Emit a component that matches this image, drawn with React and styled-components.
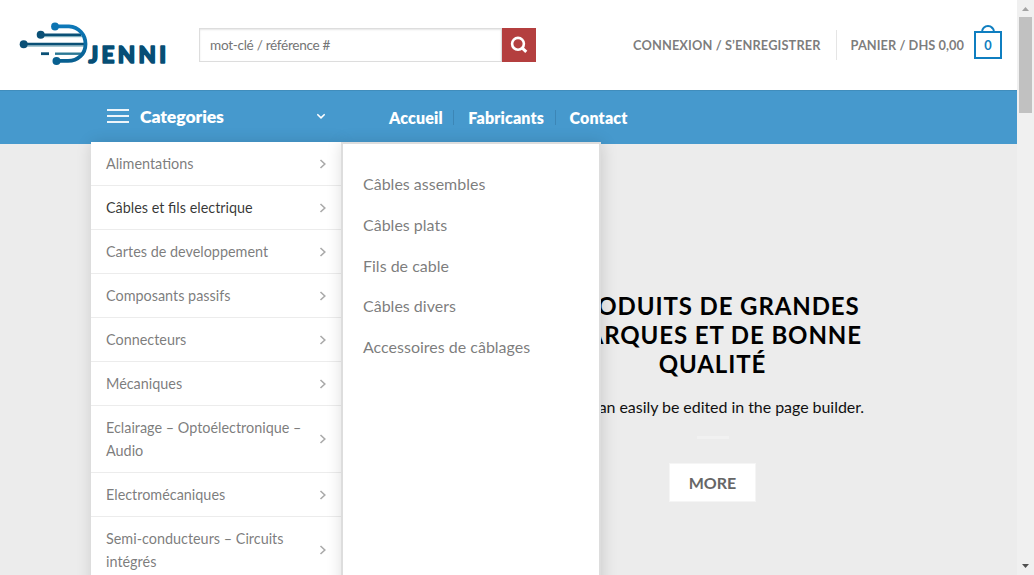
import React from 'react';
import styled, { createGlobalStyle } from 'styled-components';

const GlobalStyle = createGlobalStyle`
  *, *::before, *::after { box-sizing: border-box; }
  body { margin: 0; overflow: hidden; font-family: Lato, sans-serif; color: #777; background: #fff; }
  h2, p, ul { margin: 0; padding: 0; list-style: none; }
  a { color: inherit; text-decoration: none; }
  button, input { font-family: inherit; border-radius: 0; margin: 0; }
`;

const Viewport = styled.div`
  display: flex;
  width: 1034px;
  height: 575px;
  overflow: hidden;
`;

const Page = styled.div`
  flex: 1;
  display: flex;
  flex-direction: column;
  min-width: 0;
`;

const TopBar = styled.header`
  display: flex;
  align-items: center;
  height: 90px;
  padding: 0 15px 0 19px;
`;

const Logo = styled.svg`
  display: block;
  flex: none;
  width: 150px;
  height: 48px;
  margin-right: 30px;
`;

const SearchForm = styled.form`
  display: flex;
  width: 337px;
  height: 34px;
`;

const SearchInput = styled.input`
  flex: 1;
  min-width: 0;
  padding: 0 10px;
  border: 1px solid #ddd;
  box-shadow: inset 0 1px 2px rgba(0, 0, 0, 0.1);
  color: #333;
  font-size: 13.6px;
  letter-spacing: -0.3px;
  outline: none;
  &::placeholder { color: #757575; }
`;

const SearchButton = styled.button`
  display: flex;
  align-items: center;
  justify-content: center;
  width: 34px;
  padding: 0 0 1px;
  border: 0;
  background: #b43f3f;
  color: #fff;
`;

const Account = styled.nav`
  display: flex;
  align-items: center;
  margin-left: auto;
  font-size: 12.8px;
  font-weight: 700;
  letter-spacing: 0.12px;
  color: rgba(102, 102, 102, 0.85);
  white-space: nowrap;
`;

const AccountDivider = styled.span`
  width: 1px;
  height: 30px;
  margin: 0 14px 0 15px;
  background: rgba(0, 0, 0, 0.1);
`;

const CartLabel = styled.a`
  letter-spacing: 0.05px;
`;

const CartBag = styled.span`
  position: relative;
  display: flex;
  align-items: center;
  justify-content: center;
  width: 28px;
  height: 28px;
  margin-left: 10px;
  border: 2px solid #0f7ec0;
  color: #0f7ec0;
  letter-spacing: 0;
  &::after {
    content: '';
    position: absolute;
    left: 5px;
    bottom: 24px;
    width: 14px;
    height: 8px;
    border: 2px solid #0f7ec0;
    border-bottom: 0;
    border-radius: 99px 99px 0 0;
  }
`;

const NavBar = styled.div`
  position: relative;
  z-index: 2;
  display: flex;
  align-items: center;
  flex: none;
  height: 54px;
  padding-left: 91px;
  background: #4699cd;
  box-shadow: inset 0 1px 0 #408dbc;
  color: #fff;
`;

const CategoryToggle = styled.div`
  display: flex;
  align-items: center;
  width: 250px;
  padding: 0 16px 2px;
  font-size: 17.6px;
  font-weight: 800;
  letter-spacing: -0.1px;
  svg:last-child { margin-left: auto; }
`;

const ToggleLabel = styled.span`
  margin-left: 11px;
`;

const NavLinks = styled.ul`
  display: flex;
  align-items: center;
  margin-left: 48px;
  font-size: 16px;
  font-weight: 800;
  letter-spacing: 0.15px;
`;

const NavLink = styled.li`
  display: flex;
  align-items: center;
  &:not(:last-child)::after {
    content: '';
    width: 1px;
    height: 15px;
    margin: 0 14px 0 10.5px;
    background: #3c86b6;
  }
`;

const Dropdown = styled.div`
  position: absolute;
  top: 52px;
  left: 91px;
  display: flex;
  height: 520px;
`;

const CategoryList = styled.ul`
  width: 250px;
  background: #fff;
  box-shadow: 1px 1px 15px rgba(0, 0, 0, 0.15);
`;

const CategoryItem = styled.li`
  display: flex;
  align-items: center;
  justify-content: space-between;
  padding: 10px 14.500px 10px 15px;
  border-bottom: 1px solid #ececec;
  font-size: 14.4px;
  line-height: 23px;
  color: ${({ $active }) => ($active ? 'rgba(17, 17, 17, 0.85)' : 'rgba(102, 102, 102, 0.85)')};
  svg { flex: none; color: #aaa; }
`;

const CategoryLabel = styled.span`
  width: 204px;
`;

const SubMenu = styled.ul`
  width: 260px;
  padding: 20px;
  border: 2px solid #ddd;
  background: #fff;
  box-shadow: 1px 1px 15px rgba(0, 0, 0, 0.15);
  color: rgba(102, 102, 102, 0.85);
`;

const SubItem = styled.li`
  font-size: 16px;
  line-height: 20.8px;
  padding: 10px 0;
`;

const Hero = styled.main`
  flex: 1;
  display: flex;
  flex-direction: column;
  align-items: center;
  padding: 147px 0 0 408px;
  background: #ececec;
  text-align: center;
`;

const HeroTitle = styled.h2`
  width: 330px;
  color: #000;
  font-size: 24px;
  font-weight: 700;
  line-height: 29px;
  letter-spacing: 0.9px;
  text-transform: uppercase;
`;

const HeroText = styled.p`
  margin-top: 16px;
  color: #111;
  font-size: 16px;
  line-height: 26px;
  letter-spacing: -0.05px;
`;

const HeroRule = styled.span`
  width: 32px;
  height: 3px;
  margin-top: 16px;
  background: #f1f1f1;
`;

const HeroButton = styled.button`
  width: 87px;
  height: 39px;
  margin-top: 24px;
  padding: 0 0 1px;
  border: 1px solid #f5f5f5;
  background: #fff;
  color: #666;
  font-size: 16px;
  font-weight: 700;
`;

const ScrollTrack = styled.aside`
  display: flex;
  flex-direction: column;
  align-items: center;
  width: 17px;
  background: #f0f0f0;
  svg { display: block; flex: none; }
  svg:last-child { margin-top: auto; }
`;

const ScrollThumb = styled.span`
  width: 13px;
  height: 96px;
  background: #c1c1c1;
`;

const CATEGORIES = [
  'Alimentations',
  'Câbles et fils electrique',
  'Cartes de developpement',
  'Composants passifs',
  'Connecteurs',
  'Mécaniques',
  'Eclairage – Optoélectronique – Audio',
  'Electromécaniques',
  'Semi-conducteurs – Circuits intégrés',
];

const CABLES = [
  'Câbles assembles',
  'Câbles plats',
  'Fils de cable',
  'Câbles divers',
  'Accessoires de câblages',
];

const LINKS = ['Accueil', 'Fabricants', 'Contact'];

function BrandLogo() {
  return (
    <Logo viewBox="0 0 150 48" role="img" aria-label="Djenni">
      <defs>
        <linearGradient id="arc" x1="0" y1="0" x2="0" y2="1">
          <stop offset="0" stopColor="#0d78b8" />
          <stop offset="1" stopColor="#085f90" />
        </linearGradient>
      </defs>
      <g transform="translate(0 0.9)">
        <g fill="none">
          <path d="M22 12.900H62" stroke="#0a5076" strokeWidth="2.800" />
          <path d="M22 14.800H63" stroke="#6fa5b5" strokeWidth="1" />
          <path d="M5 22.300H66" stroke="#0a5076" strokeWidth="2.800" />
          <path d="M5 24.200H66" stroke="#6fa5b5" strokeWidth="1" />
          <path d="M22 31.8H30" stroke="#0a5076" strokeWidth="2.8" />
          <path d="M36 31.8H63" stroke="#2b7895" strokeWidth="2.4" />
          <path d="M36 4.5H50C60 5 66.500 13 66.500 22C66.500 32 59 39 49 39H37" stroke="url(#arc)" strokeWidth="3.800" />
        </g>
        <circle cx="36" cy="4.600" r="3.900" fill="#0d74b2" />
        <circle cx="21.700" cy="12.800" r="4" fill="#0a5076" />
        <circle cx="4.700" cy="22.300" r="4" fill="#0a5076" />
        <circle cx="37.500" cy="39" r="4" fill="#086090" />
      </g>
      <text
        x="69.500"
        y="41.700"
        textLength="77.500"
        lengthAdjust="spacing"
        fill="#064e75"
        stroke="#064e75"
        strokeWidth="1.600"
        strokeLinejoin="round"
        fontFamily="Lato, sans-serif"
        fontWeight="900"
        fontSize="22.500"
      >
        JENNI
      </text>
    </Logo>
  );
}

function Chevron({ down }) {
  return (
    <svg width="8" height="10" viewBox="0 0 8 10" fill="none" stroke="currentColor" strokeWidth="1.6">
      <path d={down ? 'M0.3 3.300L4 6.800L7.700 3.300' : 'M1.500 1L5.800 5L1.500 9'} />
    </svg>
  );
}

export default function App() {
  return (
    <Viewport>
      <GlobalStyle />
      <Page>
        <TopBar>
          <BrandLogo />
          <SearchForm>
            <SearchInput placeholder="mot-clé / référence #" />
            <SearchButton type="button" aria-label="Rechercher">
              <svg width="18" height="18" viewBox="0 0 18 18" fill="none" stroke="currentColor">
                <circle cx="8" cy="7.800" r="5.900" strokeWidth="2.600" />
                <path d="M12 11.800L16.300 15.800" strokeWidth="3" />
              </svg>
            </SearchButton>
          </SearchForm>
          <Account>
            <a href="#compte">CONNEXION / S’ENREGISTRER</a>
            <AccountDivider />
            <CartLabel href="#panier">PANIER / DHS 0,00</CartLabel>
            <CartBag>0</CartBag>
          </Account>
        </TopBar>
        <NavBar>
          <CategoryToggle>
            <svg width="22" height="16" viewBox="0 0 22 16" stroke="#fff" strokeOpacity="0.9" strokeWidth="2">
              <path d="M0 2H22M0 8H22M0 14H22" />
            </svg>
            <ToggleLabel>Categories</ToggleLabel>
            <Chevron down />
          </CategoryToggle>
          <NavLinks>
            {LINKS.map((link) => (
              <NavLink key={link}>{link}</NavLink>
            ))}
          </NavLinks>
          <Dropdown>
            <CategoryList>
              {CATEGORIES.map((name, i) => (
                <CategoryItem key={name} $active={i === 1}>
                  <CategoryLabel>{name}</CategoryLabel>
                  <Chevron />
                </CategoryItem>
              ))}
            </CategoryList>
            <SubMenu>
              {CABLES.map((name) => (
                <SubItem key={name}>{name}</SubItem>
              ))}
            </SubMenu>
          </Dropdown>
        </NavBar>
        <Hero>
          <HeroTitle>Produits de grandes marques et de bonne qualité</HeroTitle>
          <HeroText>You can easily be edited in the page builder.</HeroText>
          <HeroRule />
          <HeroButton>MORE</HeroButton>
        </Hero>
      </Page>
      <ScrollTrack>
        <svg width="17" height="17" viewBox="0 0 17 17">
          <path d="M5 11L8.500 7L12 11Z" fill="#a3a3a3" />
        </svg>
        <ScrollThumb />
        <svg width="17" height="17" viewBox="0 0 17 17">
          <path d="M5 6L8.500 10L12 6Z" fill="#505050" />
        </svg>
      </ScrollTrack>
    </Viewport>
  );
}
